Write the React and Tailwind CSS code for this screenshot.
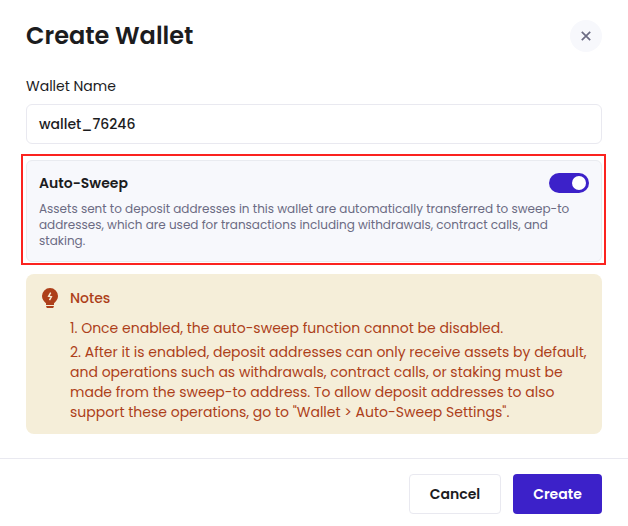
function BulbIcon() {
  return (
    <svg width="24" height="24" viewBox="0 0 24 24" className="shrink-0">
      <path d="M12 2a8 8 0 0 0-8 8.100c0 3.200 1.800 5.400 4 7.100V19h8v-1.800c2.200-1.700 4-3.900 4-7.100A8 8 0 0 0 12 2Z" fill="#ad3f1a" />
      <path d="M8.200 20h7.600v1.100l-.8.800H9l-.8-.8Z" fill="#ad3f1a" />
      <path d="M12.700 6.600 10.600 10.300 13.400 10.700 11.500 14.200" fill="none" stroke="#f5eed9" strokeWidth="1.400" />
    </svg>
  );
}

export default function App() {
  return (
    <div className="flex h-[526px] w-[628px] flex-col overflow-hidden bg-white font-[Poppins,Inter,sans-serif] text-sm leading-5 text-[#1c1c1e]">
      <div className="flex h-[458px] flex-col px-[26px] pt-5">
        <header className="flex h-8 items-center justify-between">
          <h1 className="whitespace-nowrap text-2xl font-semibold">Create Wallet</h1>
          <button className="flex size-8 items-center justify-center rounded-full bg-[#f7f8fc]" aria-label="Close">
            <svg width="10" height="10" viewBox="0 0 10 10" stroke="#6b6b83" strokeWidth="1.700">
              <path d="M.8.8 9.200 9.200M9.200.8.8 9.200" />
            </svg>
          </button>
        </header>

        <label className="mt-6 h-5">Wallet Name</label>
        <div className="mt-2 flex h-10 items-center rounded-md border border-[#e9e9f0] px-3 font-medium">
          wallet_76246
        </div>

        <section className="relative mt-4 h-[102px] rounded-md border border-[#e9ebf0] bg-[#f7f8fc] p-3">
          <div className="pointer-events-none absolute -top-[7px] -right-[5px] -bottom-1 -left-[6px] border-2 border-[#fb231f]" />
          <div className="flex h-5 items-center justify-between">
            <h2 className="font-semibold">Auto-Sweep</h2>
            <div className="flex h-5 w-10 items-center justify-end rounded-full bg-[#3c21c9] pr-[3px]">
              <div className="size-[14px] rounded-full bg-white" />
            </div>
          </div>
          <p className="mt-2 whitespace-nowrap text-xs leading-4 text-[#6b6b83]">
            Assets sent to deposit addresses in this wallet are automatically transferred to sweep-to<br />
            addresses, which are used for transactions including withdrawals, contract calls, and<br />
            staking.
          </p>
        </section>

        <section className="mt-3 flex h-40 gap-2 rounded-lg bg-[#f5eed9] p-3 text-[#ad3f1a]">
          <BulbIcon />
          <div className="whitespace-nowrap">
            <h3 className="flex h-6 items-center font-medium">Notes</h3>
            <p className="mt-2">1. Once enabled, the auto-sweep function cannot be disabled.</p>
            <p className="mt-1">
              2. After it is enabled, deposit addresses can only receive assets by default,<br />
              and operations such as withdrawals, contract calls, or staking must be<br />
              made from the sweep-to address. To allow deposit addresses to also<br />
              support these operations, go to "Wallet &gt; Auto-Sweep Settings".
            </p>
          </div>
        </section>
      </div>

      <footer className="flex h-[68px] justify-end gap-3 border-t border-[#e9e9f0] px-[26px] pt-[15px] font-semibold">
        <button className="h-10 w-[92px] rounded border border-[#e9e9f0]">Cancel</button>
        <button className="h-10 w-[89px] rounded bg-[#3c21c9] text-white">Create</button>
      </footer>
    </div>
  );
}
